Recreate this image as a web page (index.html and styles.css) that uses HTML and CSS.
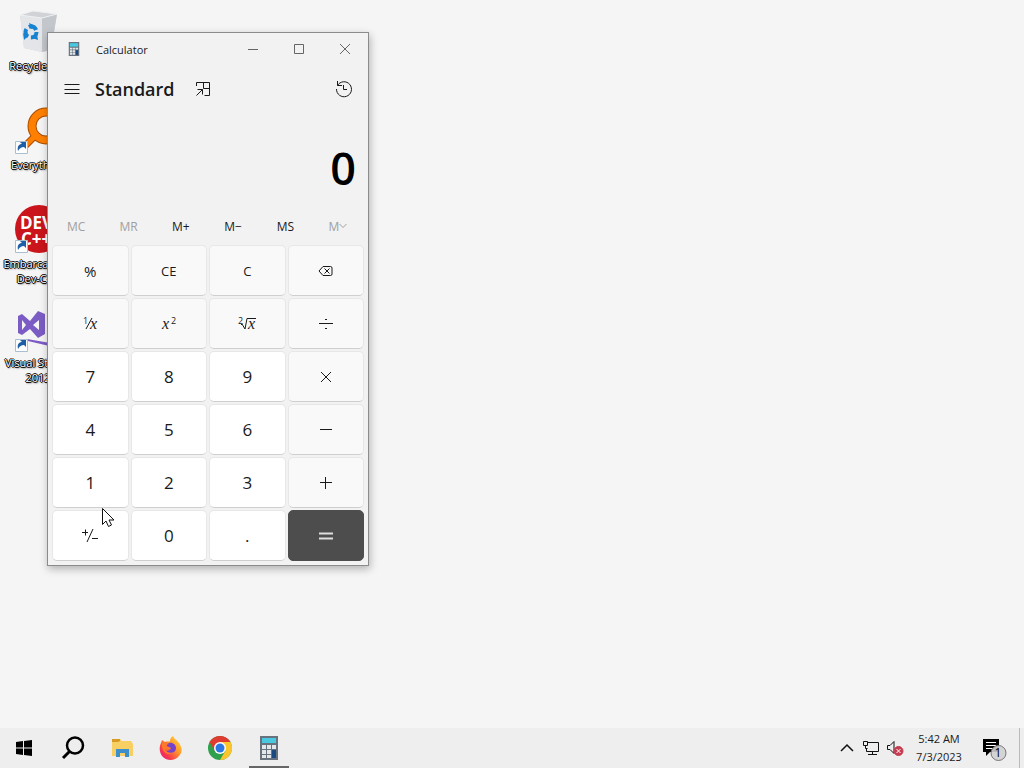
FILE: index.html
```html
<!DOCTYPE html>
<html lang="en">
<head>
<meta charset="utf-8">
<meta name="viewport" content="width=device-width, initial-scale=1">
<title>Calculator</title>
<link rel="stylesheet" href="styles.css">
</head>
<body>
<main class="desktop">
  <nav class="shortcuts" aria-label="Desktop">
    <a class="shortcut" href="#recycle">
      <svg width="48" height="48" viewBox="0 0 48 48" aria-hidden="true">
        <path d="M6 8 19 4 43 7 37 43 28 45 10 41Z" fill="#d5d8dc"/>
        <path d="M6 8 28 11 28 45 10 41Z" fill="#e3e5e8"/>
        <path d="M28 11 43 7 37 43 28 45Z" fill="#c3c6cb"/>
        <path d="M6 8 19 4 43 7 28 11Z" fill="#d0d2d5" stroke="#f0f1f3"/>
        <circle cx="17" cy="25" r="5.500" fill="none" stroke="#1683d2" stroke-width="4" stroke-dasharray="8.500 3"/>
        <path d="M15 16 22 19 17 22ZM9 26 13 30 10 33ZM23 27 24 33 18 31Z" fill="#1683d2"/>
      </svg>
      <span class="shortcut-name">Recycle Bin</span>
    </a>
    <a class="shortcut" href="#everything">
      <svg width="48" height="48" viewBox="0 0 48 48" aria-hidden="true">
        <path d="M20 31 9 42" stroke="#a94d00" stroke-width="7"/>
        <circle cx="32" cy="20" r="14" fill="none" stroke="#a94d00" stroke-width="9"/>
        <circle cx="32" cy="20" r="14" fill="none" stroke="#ff8000" stroke-width="7"/>
        <path d="M22 29 9 42" stroke="#ff8000" stroke-width="5"/>
        <path d="M1.500 35.500h12v12h-12z" fill="#fff" stroke="#a9bfd0"/>
        <path d="M4 45C3 40 5 38 8 38L6 36h6v7l-2-2c-3 0-4 1-6 4Z" fill="#1f5fa8"/>
      </svg>
      <span class="shortcut-name">Everything</span>
    </a>
    <a class="shortcut" href="#devcpp">
      <svg width="48" height="48" viewBox="0 0 48 48" aria-hidden="true">
        <circle cx="25" cy="24" r="24" fill="#c9151b"/>
        <text class="badge-text" x="6" y="24">DEV</text>
        <text class="badge-text" x="7" y="40">C++</text>
        <path d="M1.500 35.500h12v12h-12z" fill="#fff" stroke="#a9bfd0"/>
        <path d="M4 45C3 40 5 38 8 38L6 36h6v7l-2-2c-3 0-4 1-6 4Z" fill="#1f5fa8"/>
      </svg>
      <span class="shortcut-name">Embarcadero Dev-C++</span>
    </a>
    <a class="shortcut" href="#visualstudio">
      <svg width="48" height="48" viewBox="0 0 48 48" aria-hidden="true">
        <path d="M4 12 8 10 16 17 24 7 31 10V30L24 34 16 25 8 31 4 29ZM8 16V26L12 21ZM19 21 25 26V16Z" fill="#7b5cc4" fill-rule="evenodd"/>
        <path d="M13 35 48 41V45L14 37Z" fill="#7b5cc4"/>
        <path d="M1.500 35.500h12v12h-12z" fill="#fff" stroke="#a9bfd0"/>
        <path d="M4 45C3 40 5 38 8 38L6 36h6v7l-2-2c-3 0-4 1-6 4Z" fill="#1f5fa8"/>
      </svg>
      <span class="shortcut-name">Visual Studio 2012</span>
    </a>
  </nav>

  <section class="calculator" aria-label="Calculator">
    <header class="titlebar">
      <svg class="title-icon" width="14" height="14" viewBox="0 0 20 24" aria-hidden="true">
        <rect x="1" width="18" height="24" fill="#68727e"/><rect x="3" y="2" width="14" height="6" fill="#4ac8df"/>
        <path d="M3 10h4v3H3zM8 10h4v3H8zM13 10h4v3h-4zM3 14h4v3H3zM8 14h4v3H8zM3 18h4v4H3zM8 18h4v4H8z" fill="#e4e7e9"/><path d="M13 14h4v8h-4z" fill="#1b4a80"/>
      </svg>
      <span class="title">Calculator</span>
      <button class="window-button" aria-label="Minimize"><svg width="12" height="12" viewBox="0 0 12 12"><path d="M1 6.500h10"/></svg></button>
      <button class="window-button" aria-label="Maximize"><svg width="12" height="12" viewBox="0 0 12 12"><path d="M1.500 1.500h9v9h-9z"/></svg></button>
      <button class="window-button" aria-label="Close"><svg width="12" height="12" viewBox="0 0 12 12"><path d="m1 1 10 10M11 1 1 11"/></svg></button>
    </header>
    <div class="mode-bar">
      <button class="tool" aria-label="Open navigation"><svg width="16" height="16" viewBox="0 0 16 16"><path d="M.5 3.500h15M.5 8.500h15M.5 12.500h15"/></svg></button>
      <h1 class="mode">Standard</h1>
      <button class="tool" aria-label="Keep on top"><svg width="16" height="16" viewBox="0 0 16 16"><path d="M1.500 5V1.500h13v13H9.500M8.500 1.500v6h6M2.500 8.500h5v5M7.500 8.500l-6 6"/></svg></button>
      <button class="tool history" aria-label="History"><svg width="18" height="18" viewBox="0 0 18 18"><path d="M2.500 5.500A7.500 7.500 0 1 1 1.500 9M2.500 1v4.500H7M8.500 5v4.500H12"/></svg></button>
    </div>
    <output class="display">0</output>
    <div class="memory">
      <button disabled>MC</button>
      <button disabled>MR</button>
      <button>M+</button>
      <button>M−</button>
      <button>MS</button>
      <button disabled>M<svg width="8" height="6" viewBox="0 0 8 6" aria-hidden="true"><path d="m.5 1 3.500 3.500L7.500 1"/></svg></button>
    </div>
    <div class="keys">
      <button class="key percent">%</button>
      <button class="key">CE</button>
      <button class="key">C</button>
      <button class="key" aria-label="Backspace"><svg width="16" height="12" viewBox="0 0 16 12"><path d="M5 1.500h7.500a1.500 1.500 0 0 1 1.500 1.500v6a1.500 1.500 0 0 1-1.500 1.500H5L1 6ZM6.500 3.500l5 5M11.500 3.500l-5 5"/></svg></button>
      <button class="key" aria-label="Reciprocal"><svg width="18" height="22" viewBox="0 0 18 22"><text class="small-digit" x="2" y="11">1</text><path d="M11 5 5 16"/><text class="variable" x="9" y="16">x</text></svg></button>
      <button class="key" aria-label="Square"><svg width="18" height="22" viewBox="0 0 18 22"><text class="variable" x="2" y="16">x</text><text class="small-digit" x="11" y="11">2</text></svg></button>
      <button class="key" aria-label="Square root"><svg width="18" height="22" viewBox="0 0 18 22"><text class="small-digit" x="0" y="11">2</text><path d="m3 12 1-1 3 5 2-10.500h9"/><text class="variable" x="10" y="16">x</text></svg></button>
      <button class="key" aria-label="Divide"><svg width="16" height="16" viewBox="0 0 16 16"><path d="M1 7.500h14M7 3.500h2M7 12.500h2"/></svg></button>
      <button class="key number">7</button>
      <button class="key number">8</button>
      <button class="key number">9</button>
      <button class="key" aria-label="Multiply"><svg width="16" height="16" viewBox="0 0 16 16"><path d="m3 3 10 10M13 3 3 13"/></svg></button>
      <button class="key number">4</button>
      <button class="key number">5</button>
      <button class="key number">6</button>
      <button class="key" aria-label="Subtract"><svg width="16" height="16" viewBox="0 0 16 16"><path d="M2 7.500h12"/></svg></button>
      <button class="key number">1</button>
      <button class="key number">2</button>
      <button class="key number">3</button>
      <button class="key" aria-label="Add"><svg width="16" height="16" viewBox="0 0 16 16"><path d="M2 7.500h12M7.500 2v12"/></svg></button>
      <button class="key number" aria-label="Plus or minus"><svg width="18" height="16" viewBox="0 0 18 16"><path d="M1 4.500h6M4.500 1.500v6M12 1 6 14M11 10.500h6"/></svg></button>
      <button class="key number">0</button>
      <button class="key number">.</button>
      <button class="key equals" aria-label="Equals"><svg width="16" height="16" viewBox="0 0 16 16"><path d="M1 5.500h14M1 10.500h14" stroke-width="2"/></svg></button>
    </div>
  </section>

  <svg class="pointer" width="14" height="22" viewBox="0 0 14 22" aria-hidden="true"><path d="M.5 .5v16l3.500-3.500 2.500 5.500 3-1.500L7 12h5Z" fill="#fff" stroke="#111"/></svg>
</main>

<footer class="taskbar">
  <button class="task" aria-label="Start"><svg width="18" height="18" viewBox="0 0 18 18"><path d="M1 3 8 2v6.500H1ZM9 2l8-1v7.500H9ZM1 9.500h7V16l-7-1ZM9 9.500h8V17l-8-1Z"/></svg></button>
  <button class="task" aria-label="Search"><svg width="24" height="24" viewBox="0 0 24 24"><circle cx="14" cy="9.500" r="8" fill="none" stroke="#000" stroke-width="2.500"/><path d="m9 15-7 7" stroke="#000" stroke-width="3"/></svg></button>
  <button class="task" aria-label="File Explorer"><svg width="24" height="24" viewBox="0 0 24 24"><path d="M2 3h8l2 2h9l2 3v12H2Z" fill="#f8cf62"/><path d="M2 3h8v2L8 6H2Z" fill="#d79a23"/><path d="M6 13h13v8h-4v-4H10v4H6Z" fill="#3c8fca"/></svg></button>
  <button class="task" aria-label="Firefox"><svg width="24" height="24" viewBox="0 0 24 24">
    <defs><linearGradient id="flame" x1="1" y1="0" x2="0" y2="1"><stop offset="0" stop-color="#ffe345"/><stop offset=".4" stop-color="#ff9a2a"/><stop offset=".75" stop-color="#f6364e"/><stop offset="1" stop-color="#e31587"/></linearGradient></defs>
    <path d="M14 0c1 3 4 4 6 7 3 4 4 9 0 13-4 5-12 5-16 1C0 17 0 11 2 7l1-3 3 2C8 5 10 6 11 5c0-2 1-4 3-5Z" fill="url(#flame)"/><path d="M8 8c4-3 9 0 9 4 0 5-7 7-10 3 3 0 4-1 5-3L8 10Z" fill="#7542ce"/><path d="M3 7c3-2 5-1 7 1l-3 1c0 2 2 2 4 3-2 2-4 2-5 1 1 3 5 5 8 3-5 5-12 0-11-9Z" fill="#ff7a28"/>
  </svg></button>
  <button class="task" aria-label="Chrome"><svg width="24" height="24" viewBox="0 0 24 24"><circle cx="12" cy="12" r="12" fill="#2fa14c"/><path d="M1.600 6A12 12 0 0 1 22.400 6H12L6.800 15Z" fill="#df3b30"/><path d="M22.400 6A12 12 0 0 1 12 24L17.200 15 12 6Z" fill="#fbc52c"/><circle cx="12" cy="12" r="6" fill="#fff"/><circle cx="12" cy="12" r="4.500" fill="#2b78e4"/></svg></button>
  <button class="task active" aria-label="Calculator"><svg width="20" height="24" viewBox="0 0 20 24"><rect x="1" width="18" height="24" fill="#68727e"/><rect x="3" y="2" width="14" height="5" fill="#4ac8df"/><path d="M3 9h4v4H3zM8 9h4v4H8zM13 9h4v4h-4zM3 14h4v4H3zM8 14h4v4H8zM3 19h4v3H3zM8 19h4v3H8z" fill="#e4e7e9"/><path d="M13 14h4v8h-4z" fill="#1b4a80"/></svg></button>

  <div class="tray">
    <button class="tray-button" aria-label="Show hidden icons"><svg width="14" height="10" viewBox="0 0 14 10"><path d="m1 8 6-6 6 6" stroke-width="1.500"/></svg></button>
    <button class="tray-button" aria-label="Network"><svg width="18" height="16" viewBox="0 0 18 16"><path d="M5 2.500h11.500v9H4.500V8M10.500 12v2.500M6 14.500h9M1.500 1.500h4v4h-4zM3.500 6v2.500h2"/></svg></button>
    <button class="tray-button" aria-label="Volume muted"><svg width="18" height="16" viewBox="0 0 18 16"><path d="M1.500 5.500H4l4-4v12l-4-4H1.500Z"/><circle cx="12.500" cy="11" r="4.500" fill="#c63c51" stroke="#c63c51"/><path d="m10.500 9 4 4M14.500 9l-4 4" stroke="#fff"/></svg></button>
    <button class="clock"><time datetime="2023-07-03T05:42">5:42 AM<br>7/3/2023</time></button>
    <button class="notifications" aria-label="1 notification"><svg width="26" height="26" viewBox="0 0 26 26"><path d="M1 4h16v13H8l-4 4v-4H1Z" fill="#000"/><path d="M4 7.500h10M4 10.500h10M4 13.500h7" stroke="#fff"/><circle cx="16.500" cy="18" r="7.500" fill="#d0d0d0" fill-opacity=".9" stroke="#777"/><text class="count" x="16" y="22">1</text></svg></button>
    <button class="show-desktop" aria-label="Show desktop"></button>
  </div>
</footer>
</body>
</html>
```
FILE: styles.css
```css
* { box-sizing: border-box; }

body {
  margin: 0;
  min-height: 100vh;
  display: flex;
  flex-direction: column;
  background: #f5f5f5;
  color: #1a1a1a;
  font-family: "Open Sans", "Noto Sans", sans-serif;
  font-size: 12px;
}

button {
  padding: 0;
  border: 0;
  background: transparent;
  color: inherit;
  font: inherit;
  display: flex;
  align-items: center;
  justify-content: center;
}

h1 { margin: 0; }

.desktop {
  position: relative;
  flex: 1;
  overflow: hidden;
}

.shortcuts {
  width: 76px;
  padding-top: 7px;
  display: grid;
  grid-auto-rows: 99px;
}

.shortcut {
  display: flex;
  flex-direction: column;
  align-items: center;
  gap: 3px;
  color: #fff;
  text-align: center;
  text-decoration: none;
}

.shortcut-name {
  font-size: 11px;
  line-height: 15px;
  text-shadow: 1px 0 #000, -1px 0 #000, 0 1px #000, 0 -1px #000, 1px 1px 2px #000;
}

.badge-text {
  fill: #fff;
  font-size: 17px;
  font-weight: 700;
}

.calculator {
  position: absolute;
  left: 47px;
  top: 32px;
  width: 322px;
  border: 1px solid #8b8b8b;
  background: #f2f2f2;
  box-shadow: 1px 3px 8px rgba(0, 0, 0, .28);
}

.calculator svg {
  fill: none;
  stroke: currentColor;
}

.calculator svg text {
  fill: currentColor;
  stroke: none;
}

.titlebar {
  height: 32px;
  display: flex;
  align-items: center;
}

.calculator .title-icon {
  margin: 0 15px 0 19px;
  stroke: none;
}

.title {
  flex: 1;
  font-size: 11px;
}

.window-button {
  width: 46px;
  height: 32px;
  color: #666;
}

.mode-bar {
  height: 48px;
  padding: 0 4px;
  display: flex;
  align-items: center;
}

.tool {
  width: 40px;
  height: 40px;
}

.mode {
  margin: 0 8px 0 3px;
  font-size: 18px;
  font-weight: 600;
  line-height: 24px;
}

.history { margin-left: auto; }

.display {
  display: block;
  height: 96px;
  padding: 23px 12px 0 0;
  color: #000;
  font-size: 45px;
  font-weight: 600;
  line-height: 64px;
  text-align: right;
}

.memory {
  height: 36px;
  padding: 0 4px 2px 2px;
  display: grid;
  grid-template-columns: repeat(6, 1fr);
}

.memory button:disabled { color: #a0a0a0; }

.keys {
  padding: 0 4px 4px;
  display: grid;
  grid-template-columns: repeat(4, 1fr);
  grid-auto-rows: 51px;
  gap: 2px;
}

.key {
  border: 1px solid #e7e7e7;
  border-bottom-color: #cfcfcf;
  border-radius: 5px;
  background: #f9f9f9;
  font-size: 13px;
}

.percent { font-size: 15px; }

.number {
  background: #fff;
  font-size: 17px;
}

.equals {
  border-color: #4d4d4d;
  background: #4d4d4d;
  color: #ddd;
}

.variable {
  font-family: "Liberation Serif", serif;
  font-size: 16px;
  font-style: italic;
}

.small-digit { font-size: 9px; }

.pointer {
  position: absolute;
  left: 102px;
  top: 508px;
}

.taskbar {
  height: 40px;
  padding-left: 4px;
  display: flex;
  gap: 9px;
  background: #eee;
}

.task {
  width: 40px;
  border-top: 2px solid transparent;
  border-bottom: 2px solid transparent;
}

.active { border-bottom-color: #666; }

.tray {
  margin-left: auto;
  display: flex;
}

.tray-button { width: 24px; }

.tray-button svg {
  fill: none;
  stroke: #111;
}

.clock {
  width: 64px;
  font-size: 11px;
  line-height: 18px;
  text-align: center;
}

.notifications { width: 48px; }

.count {
  font-size: 12px;
  text-anchor: middle;
}

.show-desktop {
  width: 5px;
  border-left: 1px solid #bbb;
}
```
